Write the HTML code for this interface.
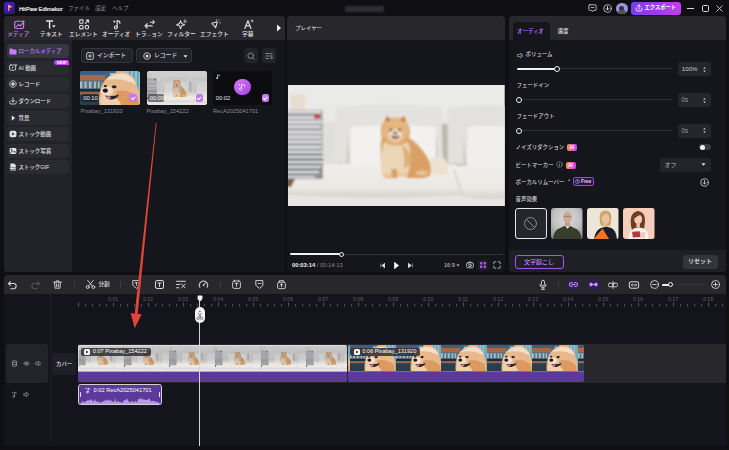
<!DOCTYPE html>
<html lang="ja"><head><meta charset="utf-8"><title>HitPaw Edimakor</title>
<style>
*{box-sizing:border-box;margin:0;padding:0}
html,body{width:729px;height:450px;overflow:hidden;background:#0e0e13}
body{position:relative;font-family:"Liberation Sans","Noto Sans CJK JP",sans-serif;color:#d6d6dc;font-size:6px;line-height:1}
.a{position:absolute}
.t{position:absolute;white-space:nowrap;line-height:1}
.panel{position:absolute;background:#15151c;border-radius:4px;overflow:hidden}
.hdr{position:absolute;left:0;top:0;right:0;background:#27272c}
svg{position:absolute;overflow:visible}
.ic{stroke:#d8d8de;fill:none;stroke-width:1;stroke-linecap:round;stroke-linejoin:round}
.side{position:absolute;left:3px;width:61.500px;height:14px;border-radius:3px;background:#2a2b30}
.side .t{left:11.500px;top:5px;font-size:5.450px;color:#e2e2e8;font-weight:500}
.btn{position:absolute;border-radius:3px;background:#22222a;border:1px solid #34343d}
.sl{position:absolute;height:1px;background:#2e2e36}
.sf{position:absolute;height:2px;background:#f0f0f2;border-radius:1px}
.kn{position:absolute;width:6px;height:6px;border-radius:50%;border:1.5px solid #f0f0f2;background:#15151c}
.vb{position:absolute;left:169.300px;width:33px;height:14px;border-radius:3px;background:#25252c}
.lab{font-size:5.450px;color:#d2d2d8}
.ai{position:absolute;width:10px;height:7px;border-radius:2px;background:linear-gradient(90deg,#f0a23c,#e84fd0 60%,#b44df0);font-size:4.5px;color:#fff;font-weight:bold;text-align:center;line-height:7px}
.chk{width:7.500px;height:7.500px;border-radius:2.200px;background:#c279ea}
.chk:after{content:"";position:absolute;left:1.900px;top:1.600px;width:3.4px;height:2px;border-left:1px solid #fff;border-bottom:1px solid #fff;transform:rotate(-48deg)}
</style></head><body>

<svg width="0" height="0" style="position:absolute"><defs>
<filter id="b1" x="-10%" y="-10%" width="120%" height="120%"><feGaussianBlur stdDeviation="0.9"/></filter>
<filter id="b0" x="-10%" y="-10%" width="120%" height="120%"><feGaussianBlur stdDeviation="0.55"/></filter><filter id="b3" x="-10%" y="-10%" width="120%" height="120%"><feGaussianBlur stdDeviation="1.6"/></filter>
<linearGradient id="wall" x1="0" y1="0" x2="0" y2="1"><stop offset="0" stop-color="#ebebea"/><stop offset="1" stop-color="#e4e3e1"/></linearGradient>
<linearGradient id="seat" x1="0" y1="0" x2="0" y2="1"><stop offset="0" stop-color="#f1efec"/><stop offset=".7" stop-color="#ebe8e4"/><stop offset="1" stop-color="#d6d2cd"/></linearGradient>
<symbol id="sofa" viewBox="0 0 217 122" preserveAspectRatio="none">
<rect x="-10" y="-10" width="237" height="142" fill="url(#wall)"/>
<g filter="url(#b1)">
<rect x="-10" y="108" width="240" height="30" fill="#e8e6e3"/>
<rect x="30" y="38" width="196" height="48" fill="#cfcbc6"/>
<rect x="30" y="37" width="20" height="47" fill="#e0dfdc"/>
<rect x="2.500" y="9.500" width="14.500" height="15.500" fill="#e6ddd0"/>
<path d="M48 22q54-5 106 0l2 56H46z" fill="#e4e2de"/>
<path d="M160 23q30-4 62-2v57h-64z" fill="#e3e1dd"/>
<path d="M154 40h6v38h-5z" fill="#bcb7b1"/>
<path d="M60 50l3 33h-5z" fill="#d0cdc8"/>
<path d="M63 42q42-3.500 85 0l1 41H62z" fill="#f2f1ef"/>
<path d="M148 46l4 36h-4z" fill="#d2cfca"/>
<path d="M180 42q20-2.500 42 0v39h-43z" fill="#f0efed"/>
<path d="M176 50l3 30h-4z" fill="#d2cfca"/>
<path d="M30 80q70-4 139 0l7 30q-90 5-182 0l2-10z" fill="url(#seat)"/>
<path d="M164 82q30-3 62-2v33q-30 3-52-2z" fill="url(#seat)"/>
<path d="M166 84l9 27" stroke="#c9c5bf" stroke-width="1.200" fill="none"/>
<rect x="-5" y="25" width="40" height="40" fill="#b2b3b7"/><rect x="-5" y="65" width="40" height="29" fill="#8e9094"/>
<g stroke="#e2e2e4" stroke-width="1.900"><path d="M-5 27h38M-5 32.500h37M-5 37h39M-5 42h37M-5 47h39M-5 52h38M-5 57h39M-5 62h38M-5 67h40M-5 72h41M-5 77h40M-5 82h38M-5 87h36M-5 92h32"/></g>
<g stroke="#6e7078" stroke-width=".7"><path d="M-5 29.500h38M-5 44.500h38M-5 59.500h39M-5 74.500h41M-5 84.500h38"/></g>
<rect x="26" y="29" width="6.500" height="4.500" fill="#c4453b"/>
<path d="M-3 94h10l-4 8h-6z" fill="#7a5c44"/>
</g>
<g filter="url(#b1)">
<path d="M142 75q9-7 16 0q5 8 1 14q-9 3-17-2z" fill="#ece2d2"/>
<path d="M94 52q-3-10 2-15l3-6 5 4q4-1.500 8 0l5-4 2 7q5 6 2 15q9 5 17 17q8 12 4 21l-7 2h-16l-1-3h-8l-1 3h-12q-5-12-4-24q-1-9 1-17z" fill="#d9a064"/>
<path d="M96 57q12 7 24 0q4 9 2 22q-1 8-3 12h-9l-1-7h-5l-1 7h-9q-3-16 2-34z" fill="#ecd6b8"/>
<path d="M114 60q8 4 10 16q-4 6-8 8q2-12-2-24z" fill="#dfae74"/>
<path d="M94.500 50q-2-10 4-15q9-5 18 0q6 5 4 15q-4 9-13 9.500q-9-.5-13-9.500z" fill="#e6b680"/>
<path d="M100 50q3-6 7.500-6q4.500 0 7.500 6q-2 6-7.500 6.500q-5.500-.5-7.500-6.500z" fill="#f2dcc0"/>
<path d="M98 37l1-5.500 4 3.500zM117 37l-1-5.500-4 3.500z" fill="#b9753c"/>
<path d="M103.500 50.500q4 1.500 8 0q-.5 3.500-4 4q-3.500-.5-4-4z" fill="#40211e"/>
<ellipse cx="107.500" cy="53" rx="1.800" ry="1.100" fill="#d98a8a"/>
<circle cx="103" cy="44.800" r="1.200" fill="#16100e"/><circle cx="111.800" cy="44.800" r="1.200" fill="#16100e"/>
<ellipse cx="107.300" cy="48" rx="1.700" ry="1.200" fill="#16100e"/>
<ellipse cx="134" cy="88" rx="6" ry="2.400" fill="#eac49a"/>
<path d="M96 88h8v4h-8zM110 88h9v4h-9z" fill="#ecc9a0"/>
</g>
</symbol>
<linearGradient id="teal" x1="0" y1="0" x2="1" y2="0"><stop offset="0" stop-color="#2d6c7c"/><stop offset=".5" stop-color="#3f8fa0"/><stop offset="1" stop-color="#3a8fa8"/></linearGradient>
<symbol id="pom" viewBox="0 0 60 34" preserveAspectRatio="none">
<rect x="-5" y="-5" width="70" height="44" fill="#3c6f86"/>
<g filter="url(#b0)">
<rect x="-3" y="-3" width="32" height="6.500" fill="#3f5f80"/>
<rect x="-3" y="4" width="28" height="5.500" fill="#a86a48"/>
<rect x="-3" y="10" width="26" height="7.800" fill="#5f7886"/>
<g fill="#a9bac4"><rect x="0" y="10.500" width="2.200" height="7"/><rect x="4.500" y="10.500" width="2" height="7"/><rect x="9" y="10.500" width="2.400" height="7"/><rect x="14" y="10.500" width="2" height="7"/><rect x="18" y="10.500" width="1.600" height="7"/></g>
<rect x="-3" y="17.800" width="26" height="3" fill="#1c2c3c"/>
<rect x="-3" y="20.800" width="24" height="3" fill="#9c6244"/>
<rect x="-3" y="23.800" width="26" height="14" fill="#2a3c4c"/>
<rect x="30" y="-3" width="34" height="40" fill="#8cc4d0"/>
<g fill="#5fa0b4"><rect x="49" y="-2" width="1.600" height="30"/><rect x="53" y="-2" width="1.600" height="30"/><rect x="57" y="-2" width="1.600" height="30"/></g>
<rect x="28" y="-3" width="8" height="5" fill="#3a6a84"/>
</g>
<g filter="url(#b0)">
<path d="M20 38q-2-10 0-17q1-9 8-15q9-7 19-4q8 3 10 13q4 8 3 23z" fill="#e9b88c"/>
<path d="M26 9q8-8 20-6q8 3 10 11q-12-8-30-5z" fill="#f4dcc6"/>
<path d="M36 20q10-2 20 4q4 6 2 12h-18q-6-8-4-16z" fill="#dc9a62"/>
<path d="M21 36q-1-8 1-13q6 6 14 4q4 2 6 10z" fill="#f0cfae"/>
<ellipse cx="27" cy="20" rx="6" ry="4.500" fill="#f3dcc4"/>
<ellipse cx="25.300" cy="19.600" rx="2.600" ry="2.100" fill="#14121a"/>
<path d="M25.500 24.500q7 1.500 13.500-1q-1 3.500-7 5q-5 .5-6.500-4z" fill="#2c2028"/>
<ellipse cx="28.500" cy="26.600" rx="2.400" ry="1.300" fill="#d88a96"/>
<ellipse cx="34.200" cy="15.700" rx="2.300" ry="1.500" fill="#1c2430"/><ellipse cx="25.300" cy="15.200" rx="1.500" ry="1.100" fill="#1c2430"/>
</g>
</symbol>
</defs></svg>

<!-- TITLE BAR -->
<div class="a" style="left:3.600px;top:2px;width:11.800px;height:11.500px;border-radius:2.600px;background:linear-gradient(135deg,#4a22c0,#2a1478)"></div>
<svg style="left:3.600px;top:2px" width="11.800" height="11.500" viewBox="0 0 12 12"><defs><linearGradient id="lg" x1="0" y1="0" x2="1" y2="1"><stop offset="0" stop-color="#ffb04a"/><stop offset="1" stop-color="#ff4fc0"/></linearGradient></defs><path d="M4 2.600l5 2.400-3.600 1.600V9.500H4z" fill="url(#lg)"/></svg>
<div class="t" style="left:19px;top:6.600px;font-size:5.700px;color:#ececf0;-webkit-text-stroke:.2px #ececf0">HitPaw Edimakor</div>
<div class="t" style="left:68px;top:6.300px;font-size:5.500px;color:#8e8e98">ファイル</div>
<div class="t" style="left:95px;top:6.300px;font-size:5.500px;color:#8e8e98">設定</div>
<div class="t" style="left:112px;top:6.300px;font-size:5.500px;color:#8e8e98">ヘルプ</div>
<div class="a" style="left:345px;top:5.500px;width:39px;height:6.500px;background:#2e2e35;filter:blur(.8px)"></div>

<svg style="left:588px;top:4px" width="9" height="9" viewBox="0 0 9 9"><path d="M1.800.8h5.400a1 1 0 0 1 1 1v3.600a1 1 0 0 1-1 1H5.300L4.500 7.600 3.700 6.400H1.800a1 1 0 0 1-1-1V1.800a1 1 0 0 1 1-1z" class="ic" style="stroke-width:.8"/><path d="M3 3.600h3" class="ic" style="stroke-width:.8"/></svg>
<svg style="left:602.500px;top:3.500px" width="9" height="9" viewBox="0 0 9 9"><circle cx="4.500" cy="4.500" r="3.800" class="ic" style="stroke-width:.8"/><path d="M4.500 2.400v3.400M3 4.500l1.500 1.500L6 4.500" class="ic" style="stroke-width:.9"/></svg>
<div class="a" style="left:616px;top:2.500px;width:11.500px;height:11.500px;border-radius:50%;background:#9c94de;overflow:hidden"><div class="a" style="left:3.200px;top:3px;width:5px;height:5px;border-radius:50%;background:#3a2e3c"></div><div class="a" style="left:2px;top:7.500px;width:7.500px;height:6px;border-radius:3px 3px 0 0;background:#5a4a52"></div></div>
<div class="a" style="left:631px;top:1.500px;width:50px;height:13px;border-radius:3px;background:linear-gradient(90deg,#7a3cf0,#c23fe6)"><svg style="left:4px;top:2.500px" width="8" height="8" viewBox="0 0 8 8"><path d="M4 5.200V1M2.500 2.500L4 1l1.500 1.500" class="ic" style="stroke:#fff;stroke-width:.8"/><path d="M1.200 4v2.200a.8.8 0 0 0 .8.800h4a.8.8 0 0 0 .8-.8V4" class="ic" style="stroke:#fff;stroke-width:.8"/></svg><div class="t" style="left:13.500px;top:3.800px;font-size:5.300px;color:#fff;font-weight:bold">エクスポート</div></div>
<div class="a" style="left:687px;top:7.500px;width:7px;height:1px;background:#d8d8de"></div>
<div class="a" style="left:701.500px;top:4.500px;width:7px;height:7px;border:1px solid #d8d8de;border-radius:1.500px"></div>
<svg style="left:716px;top:4.500px" width="7" height="7" viewBox="0 0 7 7"><path d="M.8.800l5.400 5.400M6.200.800L.8 6.200" class="ic" style="stroke-width:.9"/></svg>


<!-- LEFT PANEL -->
<div class="panel" id="left" style="left:4px;top:16px;width:281px;height:256.300px">
<div class="hdr" style="height:24px"></div>
<div class="a" style="left:0;top:24px;width:68.200px;bottom:0;background:#222328"></div>
<!-- top tabs : coordinates relative to panel (panel left=4, top=16) -->
<svg style="left:9.3px;top:2.7px" width="13.400" height="11.200" viewBox="0 0 12 10"><rect x="1.5" y="2" width="8" height="6.5" rx="1.5" stroke="#c77dff" fill="none" stroke-width="1.1"/><path d="M3 7l2-2 1.5 1.2L9 3.5" stroke="#c77dff" fill="none" stroke-width="1"/><path d="M9.5 1.2v2M8.5 2.2h2" stroke="#c77dff" stroke-width=".8"/></svg>
<div class="t" style="left:3px;top:16.300px;font-size:5.750px;color:#c77dff;font-weight:500">メディア</div>

<svg style="left:40.3px;top:2.7px" width="13.400" height="11.200" viewBox="0 0 12 10"><path d="M1.800 1.800h6.400M5 1.800v6.700" stroke="#e4e4ea" stroke-width="1.300" fill="none"/><path d="M7.200 5.600h3.200L8.800 7.800z" fill="#e4e4ea"/></svg>
<div class="t" style="left:36px;top:16.300px;font-size:5.750px;color:#e0e0e6;font-weight:500">テキスト</div>

<svg style="left:74.3px;top:2.7px" width="13.400" height="11.200" viewBox="0 0 12 10"><rect x="1.5" y=".8" width="3" height="3" rx=".6" class="ic"/><rect x="1.500" y="5.800" width="3" height="3" rx=".6" class="ic"/><circle cx="8" cy="7.300" r="1.600" class="ic"/><path d="M6.5 4L9.5 1M7.5 1h2v2" class="ic"/></svg>
<div class="t" style="left:65px;top:16.300px;font-size:5.750px;color:#e0e0e6;font-weight:500">エレメント</div>

<svg style="left:107.3px;top:2.7px" width="13.400" height="11.200" viewBox="0 0 12 10"><path d="M5.5 7.5V1.5c1 0 2.5.6 2.5 2.2" class="ic" style="stroke-width:1.1"/><circle cx="4.3" cy="7.6" r="1.3" class="ic"/><path d="M3 1.5v1.6M2.2 2.3h1.6" class="ic" style="stroke-width:.7"/></svg>
<div class="t" style="left:98px;top:16.300px;font-size:5.750px;color:#e0e0e6;font-weight:500">オーディオ</div>

<svg style="left:139.3px;top:2.7px" width="13.400" height="11.200" viewBox="0 0 12 10"><path d="M1.800 6.200h6.400M1.800 6.200l2-2M1.800 6.200l2 2" class="ic" style="stroke-width:1.100"/><path d="M6.500 2.800h3.700M8.900 1.500l1.300 1.300-1.300 1.300" class="ic" style="stroke-width:.9"/></svg>
<div class="t" style="left:131px;top:16.300px;font-size:5.750px;color:#e0e0e6;font-weight:500">トラ...ョン</div>

<svg style="left:171.3px;top:2.7px" width="13.400" height="11.200" viewBox="0 0 12 10"><path d="M5 1.5l1 2.6 2.6 1-2.6 1-1 2.6-1-2.6-2.6-1 2.6-1z" class="ic" style="stroke-width:.9"/><path d="M9 .8l.4 1 .9.4-.9.4-.4 1-.4-1-.9-.4.9-.4z" class="ic" style="stroke-width:.6"/></svg>
<div class="t" style="left:163px;top:16.300px;font-size:5.750px;color:#e0e0e6;font-weight:500">フィルター</div>

<svg style="left:205.3px;top:2.7px" width="13.400" height="11.200" viewBox="0 0 12 10"><path d="M2.5 3.8l5-1.3-1.6 5.3z" class="ic" style="stroke-width:1"/><path d="M8.6 1.3l.6-.6M9.5 3.4h.9M6.8.4v.8" class="ic" style="stroke-width:.6"/></svg>
<div class="t" style="left:196px;top:16.300px;font-size:5.750px;color:#e0e0e6;font-weight:500">エフェクト</div>

<svg style="left:238.3px;top:2.7px" width="13.400" height="11.200" viewBox="0 0 12 10"><path d="M2.5 8.5L5.3 1.5 8 8.5M3.5 6.2h3.6" class="ic" style="stroke-width:1.1"/><path d="M9 .8v1.8M8.1 1.7h1.8" class="ic" style="stroke-width:.7"/></svg>
<div class="t" style="left:238px;top:16.300px;font-size:5.750px;color:#e0e0e6;font-weight:500">字幕</div>

<svg style="left:272px;top:8px" width="6" height="8" viewBox="0 0 6 8"><path d="M1 .5l4 3.5-4 3.5z" fill="#f0f0f4"/></svg>

<!-- sidebar -->
<div class="side" style="top:28px;background:#36373e"><svg style="left:2.200px;top:3.5px" width="8" height="7" viewBox="0 0 8 7"><path d="M.5 1.2a.7.7 0 0 1 .7-.7h2l.8 1h2.8a.7.7 0 0 1 .7.7v3.6a.7.7 0 0 1-.7.7H1.2a.7.7 0 0 1-.7-.7z" fill="#c77dff"/></svg><div class="t" style="color:#c77dff">ローカルメディア</div></div>
<div class="side" style="top:44.600px"><svg style="left:2.200px;top:3.5px" width="8" height="7" viewBox="0 0 8 7"><rect x=".6" y="1" width="6" height="5.2" rx="1.2" class="ic" style="stroke-width:.9"/><path d="M3 2.6v2l1.7-1z" fill="#d8d8de"/><path d="M7 .2v1.6M6.2 1h1.6" class="ic" style="stroke-width:.6"/></svg><div class="t">AI 動画</div>
 <div class="a" style="left:47px;top:-.7px;width:15px;height:5.500px;border-radius:2.700px 2.700px 0 2.700px;background:linear-gradient(90deg,#9a4df5,#d24be8);font-size:4px;color:#fff;font-weight:bold;text-align:center;line-height:5.500px;font-style:italic">NEW</div></div>
<div class="side" style="top:61.300px"><svg style="left:2.200px;top:3px" width="8" height="8" viewBox="0 0 8 8"><circle cx="4" cy="4" r="3.2" class="ic" style="stroke-width:.8" stroke-dasharray="1.2 .6"/><circle cx="4" cy="4" r="1.8" fill="#d8d8de"/></svg><div class="t">レコード</div></div>
<div class="side" style="top:77.900px"><svg style="left:2.200px;top:3px" width="8" height="8" viewBox="0 0 8 8"><path d="M4 .8v4M2.4 3.4L4 5l1.6-1.6" class="ic" style="stroke-width:.9"/><path d="M.8 4.5v1.2a1.3 1.3 0 0 0 1.3 1.3h3.8a1.3 1.3 0 0 0 1.3-1.3V4.5" class="ic" style="stroke-width:.9"/></svg><div class="t">ダウンロード</div></div>
<div class="side" style="top:94.500px"><svg style="left:4px;top:4px" width="5" height="6" viewBox="0 0 5 6"><path d="M.8.6l3.4 2.4L.8 5.4z" fill="#e6e6ea"/></svg><div class="t">背景</div></div>
<div class="side" style="top:111.200px"><svg style="left:2.200px;top:3px" width="8" height="8" viewBox="0 0 8 8"><rect x=".6" y=".8" width="6.8" height="6.4" rx="1.6" fill="#e0e0e6"/><path d="M3.2 2.6v2.8l2.4-1.4z" fill="#1f1f26"/></svg><div class="t">ストック動画</div></div>
<div class="side" style="top:127.800px"><svg style="left:2.200px;top:3px" width="8" height="8" viewBox="0 0 8 8"><rect x=".6" y="1" width="6.8" height="6" rx="1.4" fill="#e0e0e6"/><path d="M1.4 6l2-2.2 1.4 1.4 1-1 1.2 1.6" stroke="#1f1f26" stroke-width=".8" fill="none"/><circle cx="2.4" cy="2.7" r=".7" fill="#1f1f26"/></svg><div class="t">ストック写真</div></div>
<div class="side" style="top:144.400px"><svg style="left:2.200px;top:3px" width="8" height="8" viewBox="0 0 8 8"><path d="M1.4.6h3.8l1.6 1.6v5.2H1.4z" fill="#e0e0e6"/><rect x=".4" y="4" width="6" height="2.6" fill="#1f1f26"/><rect x=".8" y="4.4" width="5.4" height="1.8" fill="#e0e0e6"/></svg><div class="t">ストックGIF</div></div>

<!-- buttons -->
<div class="btn" style="left:76.500px;top:32.200px;width:52.500px;height:15px"><svg style="left:4.500px;top:2.500px" width="8" height="8" viewBox="0 0 8 8"><rect x=".6" y=".6" width="6.8" height="6.8" rx="1.4" class="ic" style="stroke-width:.8"/><path d="M4 2.2v3.6M2.2 4h3.6" class="ic" style="stroke-width:.8"/></svg><div class="t" style="left:15.500px;top:4.100px;font-size:5.800px;color:#d4d4da;font-weight:500">インポート</div></div>
<div class="btn" style="left:132px;top:32.200px;width:56px;height:15px"><svg style="left:6px;top:2.500px" width="8" height="8" viewBox="0 0 8 8"><circle cx="4" cy="4" r="3.3" class="ic" style="stroke-width:.8"/><circle cx="4" cy="4" r="1.5" fill="#d8d8de"/></svg><div class="t" style="left:17px;top:4.100px;font-size:5.800px;color:#d4d4da;font-weight:500">レコード</div><svg style="left:46px;top:5.5px" width="5" height="3" viewBox="0 0 5 3"><path d="M.5.3h4L2.5 2.7z" fill="#e6e6ea"/></svg></div>
<div class="a" style="left:239.500px;top:32.400px;width:14.500px;height:14.500px;border-radius:3px;background:#22222a"><svg style="left:3.5px;top:3.5px" width="8" height="8" viewBox="0 0 8 8"><circle cx="3.7" cy="3.7" r="2.8" class="ic" style="stroke:#9c9ca6;stroke-width:.8"/><path d="M5.8 5.8l1.4 1.4" class="ic" style="stroke:#9c9ca6;stroke-width:.8"/></svg></div>
<div class="a" style="left:257.800px;top:32.400px;width:14.500px;height:14.500px;border-radius:3px;background:#22222a"><svg style="left:3.5px;top:3.5px" width="8" height="8" viewBox="0 0 8 8"><path d="M.8 1.5h4.4M.8 4h4.4M.8 6.5h3M6.8 1v5.6M5.8 5.6l1 1 1-1" class="ic" style="stroke:#9c9ca6;stroke-width:.8"/></svg></div>

<!-- media thumbs -->
<div class="a" id="th1" style="left:76px;top:55px;width:60px;height:34px;border-radius:3px;overflow:hidden;background:#2e6f80"><svg style="left:0;top:0;overflow:hidden" width="60" height="34"><use href="#pom" width="60" height="34"/></svg><div class="a" style="left:1.800px;top:22.800px;width:16px;height:8.500px;border-radius:1.800px;background:rgba(20,24,32,.6)"></div><div class="t" style="left:3.300px;top:24.600px;font-size:5.800px;color:#f0f0f4">00:10</div></div>
<div class="a" id="th2" style="left:142.5px;top:55px;width:60px;height:34px;border-radius:3px;overflow:hidden;background:#dcdad6"><svg style="left:0;top:0;overflow:hidden" width="60" height="34"><use href="#sofa" width="60" height="34"/></svg><div class="a" style="left:0;top:0;width:100%;height:100%;background:linear-gradient(rgba(96,96,108,.2) 0,rgba(96,96,108,.2) 58%,rgba(96,96,108,0) 78%)"></div><div class="a" style="left:1.800px;top:22.800px;width:16px;height:8.500px;border-radius:1.800px;background:rgba(70,70,76,.72)"></div><div class="t" style="left:3.300px;top:24.600px;font-size:5.800px;color:#f0f0f4">00:09</div></div>
<div class="a" id="th3" style="left:208.5px;top:55px;width:59px;height:34px;border-radius:3px;overflow:hidden;background:#0c0c10">
 <svg style="left:3.600px;top:3px" width="4.500" height="5.400" viewBox="0 0 5 6"><path d="M1.8 4.6V.8l2.2.6v1" stroke="#fff" stroke-width=".7" fill="none"/><circle cx="1.2" cy="4.6" r=".9" fill="#fff"/></svg>
 <div class="a" style="left:21.400px;top:7.600px;width:16.800px;height:16.800px;border-radius:50%;background:linear-gradient(135deg,#d478f4,#a846e8)"></div>
 <svg style="left:24.800px;top:11px" width="10" height="10" viewBox="0 0 10 10"><path d="M4.6 7V2.4l3 .8v1.3" stroke="#f3d8ff" stroke-width=".9" fill="none" stroke-linecap="round"/><circle cx="3.6" cy="7" r="1.2" stroke="#f3d8ff" stroke-width=".8" fill="none"/><path d="M2.4 2v1.6M1.6 2.8h1.6" stroke="#f3d8ff" stroke-width=".6"/></svg>
 <div class="t" style="left:3.300px;top:24.600px;font-size:5.800px;color:#e4e4e8">00:02</div>
</div>
<div class="t" style="left:76.5px;top:92.5px;font-size:5.650px;color:#8a8a94">Pixabay_131920</div>
<div class="t" style="left:142.5px;top:92.5px;font-size:5.650px;color:#8a8a94">Pixabay_154222</div>
<div class="t" style="left:209px;top:92.5px;font-size:5.650px;color:#8a8a94">RecA2025041701</div>
<div class="a chk" style="left:125px;top:78.300px"></div>
<div class="a chk" style="left:191.500px;top:78.300px"></div>
<div class="a chk" style="left:257.500px;top:78.300px"></div>

</div>

<!-- PLAYER PANEL -->
<div class="panel" id="player" style="left:287.400px;top:16px;width:217.600px;height:256.300px">
<div class="hdr" style="height:24px"></div>
<div class="t" style="left:7.800px;top:9.600px;font-size:5.400px;color:#d6d6dc;font-weight:500">プレイヤー</div>
<!-- photo: panel-relative (panel left=288, top=16) -->
<svg style="left:.7px;top:68.600px;overflow:hidden" width="216.700" height="121.900"><use href="#sofa" width="216.700" height="121.900"/></svg>
<!-- progress -->
<div class="a" style="left:3px;top:237.500px;width:212.500px;height:1px;background:#33333b"></div>
<div class="a" style="left:3px;top:237px;width:51px;height:2px;background:#f2f2f4;border-radius:1px"></div>
<div class="a" style="left:52px;top:235.5px;width:5px;height:5px;border-radius:50%;border:1.2px solid #f2f2f4;background:#18181e"></div>
<div class="t" style="left:4.600px;top:246.500px;font-size:5.800px;color:#ececf0"><b style="font-weight:bold">00:03:14</b> <span style="color:#8a8a94">/ 00:14:13</span></div>
<svg style="left:91.900px;top:245.800px" width="8" height="7" viewBox="0 0 8 7"><path d="M6 .8v5.4L2.2 3.5z" fill="#d8d8de"/><path d="M1.6 1.5v4" stroke="#8a8a94" stroke-width=".8"/></svg>
<svg style="left:105.900px;top:244.700px" width="7" height="9" viewBox="0 0 7 9"><path d="M1.2.8l4.8 3.7-4.8 3.7z" fill="#fff"/></svg>
<svg style="left:118.900px;top:245.800px" width="8" height="7" viewBox="0 0 8 7"><path d="M2 .8v5.4l3.8-2.7z" fill="#d8d8de"/><path d="M6.4 1.5v4" stroke="#8a8a94" stroke-width=".8"/></svg>
<div class="t" style="left:156.500px;top:246.800px;font-size:5.600px;color:#c8c8d0">16:9</div>
<svg style="left:168.600px;top:247.800px" width="4" height="3" viewBox="0 0 4 3"><path d="M.4.4h3.2L2 2.4z" fill="#c8c8d0"/></svg>
<svg style="left:178.500px;top:245.300px" width="8" height="8" viewBox="0 0 8 8"><rect x=".7" y="1.8" width="6.6" height="5" rx="1.2" class="ic" style="stroke-width:.8"/><circle cx="4" cy="4.4" r="1.3" class="ic" style="stroke-width:.8"/><path d="M2.8 1.6l.5-.8h1.4l.5.8" class="ic" style="stroke-width:.7"/></svg>
<div class="a" style="left:190.700px;top:244.300px;width:10px;height:10px;border-radius:2px;background:#1f1f27"></div><svg style="left:191.700px;top:245.300px" width="8" height="8" viewBox="0 0 8 8"><g fill="#a456f0"><rect x="1" y="1" width="2.4" height="2.4" rx=".5"/><rect x="4.6" y="1" width="2.4" height="2.4" rx=".5"/><rect x="1" y="4.6" width="2.4" height="2.4" rx=".5"/><rect x="4.6" y="4.6" width="2.4" height="2.4" rx=".5"/></g></svg>
<svg style="left:205.700px;top:245.300px" width="8" height="8" viewBox="0 0 8 8"><path d="M.8 2.8V1.6a.8.8 0 0 1 .8-.8h1.2M5.2.8h1.2a.8.8 0 0 1 .8.8v1.2M7.200 5.200v1.200a.8.8 0 0 1-.8.8H5.200M2.800 7.200H1.600a.8.8 0 0 1-.8-.8V5.200" class="ic" style="stroke-width:.8"/></svg>

</div>

<!-- RIGHT PANEL -->
<div class="panel" id="right" style="left:508.500px;top:16px;width:217.200px;height:256.300px">
<div class="hdr" style="height:24px"></div>
<!-- panel-relative: left=509, top=16 -->
<div class="a" style="left:4px;top:6px;width:37px;height:18px;border-radius:4px 4px 0 0;background:#15151c"></div>
<div class="t" style="left:8.500px;top:13.200px;font-size:5.450px;color:#c77dff;font-weight:500">オーディオ</div>
<div class="t" style="left:49px;top:13.200px;font-size:5.450px;color:#e0e0e6;font-weight:500">速度</div>

<svg style="left:8px;top:35.500px" width="7" height="7" viewBox="0 0 7 7"><path d="M.8 2.500h1.400L4 1v5L2.200 4.500H.8z" class="ic" style="stroke-width:.7;stroke:#b0b0b8"/><path d="M5.300 2.300q.8 1.200 0 2.400" class="ic" style="stroke-width:.7;stroke:#b0b0b8"/></svg>
<div class="t lab" style="left:17px;top:36px;font-weight:500">ボリューム</div>
<div class="sl" style="left:8px;top:52px;width:156px"></div>
<div class="sf" style="left:8px;top:51.500px;width:40px"></div>
<div class="kn" style="left:45px;top:49.500px"></div>
<div class="vb" style="top:46.300px"><div class="t" style="left:4px;top:3.900px;font-size:6.200px;color:#c8c8d0">100%</div><svg style="left:24.500px;top:2.500px" width="5" height="9" viewBox="0 0 5 9"><path d="M1.200 3.400L2.500 1.900 3.800 3.400zM1.200 5.600L2.500 7.100 3.800 5.600z" fill="#e0e0e6"/></svg></div>

<div class="t lab" style="left:8px;top:67px;font-weight:500">フェードイン</div>
<div class="sl" style="left:8px;top:83px;width:156px"></div>
<div class="kn" style="left:7px;top:80.500px"></div>
<div class="vb" style="top:77px"><div class="t" style="left:3.800px;top:3.800px;font-size:6.300px;color:#9a9aa4">0s</div><svg style="left:24.500px;top:2.500px" width="5" height="9" viewBox="0 0 5 9"><path d="M1.200 3.400L2.500 1.900 3.800 3.400zM1.200 5.600L2.500 7.100 3.800 5.600z" fill="#e0e0e6"/></svg></div>

<div class="t lab" style="left:8px;top:98px;font-weight:500">フェードアウト</div>
<div class="sl" style="left:8px;top:114px;width:156px"></div>
<div class="kn" style="left:7px;top:111.500px"></div>
<div class="vb" style="top:107.900px"><div class="t" style="left:3.800px;top:3.800px;font-size:6.300px;color:#9a9aa4">0s</div><svg style="left:24.500px;top:2.500px" width="5" height="9" viewBox="0 0 5 9"><path d="M1.200 3.400L2.500 1.900 3.800 3.400zM1.200 5.600L2.500 7.100 3.800 5.600z" fill="#e0e0e6"/></svg></div>

<div class="t lab" style="left:7px;top:128.900px;font-weight:500">ノイズリダクション</div>
<div class="ai" style="left:58.500px;top:128.200px">AI</div>
<div class="a" style="left:190.500px;top:128.300px;width:11.500px;height:6px;border-radius:3px;background:#3a3a42"></div>
<div class="a" style="left:191.200px;top:128.800px;width:5px;height:5px;border-radius:50%;background:#f4f4f6"></div>

<div class="t lab" style="left:7px;top:146.600px;font-weight:500">ビートマーカー</div>
<svg style="left:47.500px;top:144.800px" width="7" height="7" viewBox="0 0 7 7"><circle cx="3.500" cy="3.500" r="2.800" class="ic" style="stroke:#9a9aa4;stroke-width:.6"/><path d="M3.500 3.200v1.800" class="ic" style="stroke:#9a9aa4;stroke-width:.7"/><circle cx="3.500" cy="2.100" r=".4" fill="#9a9aa4"/></svg>
<div class="ai" style="left:57px;top:145.500px">AI</div>
<div class="a" style="left:151px;top:141.500px;width:51px;height:14px;border-radius:3px;background:#23232a"><div class="t" style="left:5px;top:4px;font-size:6px;color:#b4b4bc">オフ</div><svg style="left:41.500px;top:5.500px" width="5" height="3" viewBox="0 0 5 3"><path d="M.5.3h4L2.500 2.700z" fill="#e6e6ea"/></svg></div>

<div class="t lab" style="left:7px;top:164.300px;font-weight:500">ボーカルリムーバー</div>
<div class="t" style="left:59.800px;top:162.200px;font-size:5px;color:#d2d2d8">•</div>
<div class="a" style="left:64.200px;top:161.300px;width:21.500px;height:8.300px;border-radius:2.200px;border:.8px solid #8c52d6;background:#2b1545"><svg style="left:1.700px;top:.6px" width="5" height="5" viewBox="0 0 5 5"><circle cx="2.500" cy="2.500" r="1.900" fill="none" stroke="#dcc0ff" stroke-width=".55"/><path d="M2.500 1.400v1.200l.8.500" fill="none" stroke="#dcc0ff" stroke-width=".55"/></svg><div class="t" style="left:7.300px;top:1.400px;font-size:4.800px;color:#e4d0ff;font-weight:bold">Free</div></div>
<svg style="left:191.500px;top:162px" width="9" height="9" viewBox="0 0 9 9"><circle cx="4.500" cy="4.500" r="3.800" class="ic" style="stroke-width:.8"/><path d="M4.500 2.400v3.600M3 4.600l1.500 1.500L6 4.600" class="ic" style="stroke-width:.8"/></svg>

<div class="t lab" style="left:7px;top:181.200px;font-weight:500">音声効果</div>
<div class="a" style="left:6.500px;top:191.500px;width:31.500px;height:31.500px;border-radius:3px;border:1.200px solid #e8e8ec;background:#26262d"><svg style="left:7.300px;top:7.300px" width="15" height="15" viewBox="0 0 15 15"><circle cx="7.500" cy="7.500" r="6" class="ic" style="stroke:#8a8a92;stroke-width:1"/><path d="M3.300 3.300l8.400 8.400" class="ic" style="stroke:#8a8a92;stroke-width:1"/></svg></div>
<svg style="left:42.500px;top:191.500px;overflow:hidden;border-radius:3px" width="31.500" height="31.500" viewBox="0 0 32 32"><defs><radialGradient id="gm" cx=".5" cy=".35" r=".75"><stop offset="0" stop-color="#dcdcdc"/><stop offset=".55" stop-color="#c2c2c2"/><stop offset="1" stop-color="#8c8c8c"/></radialGradient></defs><rect width="32" height="32" fill="url(#gm)"/><g filter="url(#b0)"><path d="M2 33q0-11 8-13l4-2h5l4 2q8 2 8 13z" fill="#383e2e"/><rect x="14.300" y="13" width="5" height="6" fill="#c49a86"/><ellipse cx="16.700" cy="9.300" rx="4.500" ry="6" fill="#cfa896"/><path d="M13 8.500h7.400" stroke="#7a6a64" stroke-width=".7"/><path d="M14.500 18.500l2.300 2.500 2.300-2.500z" fill="#e8e8e8"/></g></svg>
<svg style="left:78.500px;top:191.500px;overflow:hidden;border-radius:3px" width="31.500" height="31.500" viewBox="0 0 32 32"><rect width="32" height="32" fill="#eee5d9"/><g filter="url(#b0)"><path d="M13 12q-1.500-9 6-9.500q7 .5 5.500 9.500q0 4-1 6h-9q-1.500-2-1.500-6z" fill="#c9a468"/><ellipse cx="18.800" cy="11" rx="4" ry="5.300" fill="#eac2a4"/><path d="M14.500 7q3-4 8.500-1.500q-4 0-8.500 4z" fill="#d4b070"/><rect x="16.500" y="15" width="4" height="5" fill="#e2b696"/><path d="M7 33q1-11 8-13l5-1 4 1q6 2 6.500 13z" fill="#1c1e2a"/><path d="M15.800 20.800L5.500 33h17.800z" fill="#f4741c"/></g></svg>
<svg style="left:114.500px;top:191.500px;overflow:hidden;border-radius:3px" width="31.500" height="31.500" viewBox="0 0 32 32"><rect width="32" height="32" fill="#f6cdb8"/><g filter="url(#b0)"><path d="M8.500 20q-3-15 6.500-17q9 1 7 14q0 4-2 6.500h-9.500q-1.500-1-2-3.500z" fill="#6e3c28"/><ellipse cx="15.400" cy="11.500" rx="4" ry="5" fill="#f2ccb4"/><path d="M11.300 9q2-4 8-2.500q-4 .5-8 4.500z" fill="#6e3c28"/><rect x="13.600" y="15.500" width="3.600" height="4" fill="#eabfa6"/><path d="M5.500 33q0-10 6-12.500l4-1 5 1q5.500 2.500 5.500 12.500z" fill="#f5f1ef"/><path d="M9.200 24l7.800-.5 1 6-8 .5z" fill="#b8383a"/><path d="M17 24l6 1-1 6-4-1z" fill="#f0cdb8"/></g></svg>
<div class="a" style="left:0;top:234px;width:217px;height:22px;background:#1f1f26"></div>
<div class="a" style="left:6px;top:238.500px;width:49px;height:14px;border-radius:3px;border:1px solid #a456f0"><div class="t" style="left:0;right:0;top:3.500px;text-align:center;font-size:6px;color:#c084ff;font-weight:500">文字起こし</div></div>
<div class="a" style="left:174px;top:238.500px;width:35px;height:14px;border-radius:3px;background:#34343c"><div class="t" style="left:0;right:0;top:3.500px;text-align:center;font-size:6px;color:#e8e8ec;font-weight:500">リセット</div></div>

</div>

<!-- TIMELINE PANEL -->
<div class="panel" id="tl" style="left:4px;top:275.300px;width:722px;height:171px;background:#14151c">
<div class="hdr" style="height:18.700px;background:#27272c"></div>
<div class="a" style="left:0;top:.7px;width:722px;height:171px">
<!--TLS-->
<div class="a" style="left:45.500px;top:18px;width:.8px;bottom:0;background:#1b1c25"></div>
<svg style="left:4.0px;top:5.0px;transform:scale(1.12)" width="9" height="8" viewBox="0 0 9 8"><path d="M2.600 1L.9 2.700l1.700 1.700" class="ic" style="stroke-width:.9"/><path d="M1.200 2.700h4.300a2.300 2.300 0 0 1 0 4.600H3" class="ic" style="stroke-width:.9"/></svg>
<svg style="left:26.5px;top:5.0px;transform:scale(1.12)" width="9" height="8" viewBox="0 0 9 8"><path d="M6.400 1l1.700 1.700-1.700 1.700" class="ic" style="stroke:#54545e;stroke-width:.9"/><path d="M7.800 2.700H3.500a2.300 2.300 0 0 0 0 4.600H6" class="ic" style="stroke:#54545e;stroke-width:.9"/></svg>
<svg style="left:48.5px;top:4.5px;transform:scale(1.12)" width="9" height="9" viewBox="0 0 9 9"><path d="M1 2.400h7M3.300 2.400V1.300h2.400v1.100M1.900 2.400l.4 5.400h4.400l.4-5.400M3.700 4v2.400M5.300 4v2.400" class="ic" style="stroke-width:.8"/></svg>
<div class="a" style="left:69.500px;top:5.500px;width:1px;height:7px;background:#3a3a44"></div>
<svg style="left:81.5px;top:4.5px;transform:scale(1.12)" width="9" height="9" viewBox="0 0 9 9"><circle cx="2" cy="6.800" r="1.300" class="ic" style="stroke-width:.8"/><circle cx="7" cy="6.800" r="1.300" class="ic" style="stroke-width:.8"/><path d="M2.800 5.800L7 .8M6.200 5.800L2 .8" class="ic" style="stroke-width:.8"/></svg>
<div class="t" style="left:94.500px;top:6.200px;font-size:5.600px;color:#e0e0e6;font-weight:500">分割</div>
<div class="a" style="left:115.500px;top:5.500px;width:1px;height:7px;background:#3a3a44"></div>
<svg style="left:128.0px;top:4.5px;transform:scale(1.12)" width="9" height="9" viewBox="0 0 9 9"><path d="M1.500 1h6v4.500L4.500 8 1.500 5.500z" class="ic" style="stroke-width:.8"/><path d="M3.200 3h2.600M4.500 3v2.400" class="ic" style="stroke-width:.7"/></svg>
<svg style="left:151.0px;top:4.5px;transform:scale(1.12)" width="9" height="9" viewBox="0 0 9 9"><rect x=".9" y="1" width="7.200" height="7" rx="1.600" class="ic" style="stroke-width:.9"/><path d="M3 3.200h3M4.500 3.200v3" class="ic" style="stroke-width:.9"/></svg>
<svg style="left:172.0px;top:4.5px;transform:scale(1.12)" width="10" height="9" viewBox="0 0 10 9"><path d="M1 1.500h8M1 4.500h3" class="ic" style="stroke-width:.9"/><path d="M5.500 4l3.200 3.600M8.700 4L5.500 7.600" class="ic" style="stroke-width:.8"/><path d="M1 7.500h2" class="ic" style="stroke-width:.9"/></svg>
<svg style="left:195.0px;top:4.5px;transform:scale(1.12)" width="9" height="9" viewBox="0 0 9 9"><path d="M1.300 7a3.700 3.700 0 1 1 6.400 0" class="ic" style="stroke-width:.9"/><path d="M4.500 5.200l1.600-2" class="ic" style="stroke-width:.9"/><circle cx="4.500" cy="5.300" r=".7" fill="#d8d8de"/></svg>
<div class="a" style="left:215.500px;top:5.500px;width:1px;height:7px;background:#3a3a44"></div>
<svg style="left:227.5px;top:4.5px;transform:scale(1.12)" width="9" height="9" viewBox="0 0 9 9"><rect x="1" y="1.400" width="7" height="6.600" rx="1.400" class="ic" style="stroke-width:.8"/><path d="M3.200 3.400h2.600M4.500 3.400v2.800" class="ic" style="stroke-width:.8"/><path d="M2.500.6v1.200M6.500.6v1.200" class="ic" style="stroke-width:.7"/></svg>
<svg style="left:250.5px;top:4.5px;transform:scale(1.12)" width="9" height="9" viewBox="0 0 9 9"><path d="M1.500 1h6v4.500L4.500 8 1.500 5.500z" class="ic" style="stroke-width:.8"/><path d="M3 3.600h3" class="ic" style="stroke-width:.7"/></svg>
<svg style="left:273.0px;top:4.5px;transform:scale(1.12)" width="9" height="9" viewBox="0 0 9 9"><rect x="1" y="2.400" width="7" height="5.800" rx="1.400" class="ic" style="stroke-width:.8"/><path d="M4.500 6.600V4M3.300 5l1.200-1.200L5.700 5" class="ic" style="stroke-width:.8"/><path d="M2.600 2.400V1h3.800v1.400" class="ic" style="stroke-width:.7"/></svg>
<svg style="left:534.5px;top:4.0px;transform:scale(1.12)" width="8" height="10" viewBox="0 0 8 10"><rect x="2.600" y=".8" width="2.800" height="5" rx="1.400" class="ic" style="stroke-width:.8"/><path d="M1.200 4.400a2.800 2.800 0 0 0 5.600 0M4 7.200v1.600M2.600 8.800h2.800" class="ic" style="stroke-width:.8"/></svg>
<div class="a" style="left:553.500px;top:5.500px;width:1px;height:7px;background:#3a3a44"></div>
<div class="a" style="left:563.5px;top:4.500px;width:11px;height:9px;border-radius:2px;background:#2f1b5a"></div>
<svg style="left:564.5px;top:5.5px;transform:scale(1.12)" width="9" height="7" viewBox="0 0 9 7"><path d="M3.600 2H2.400a1.500 1.500 0 0 0 0 3h1.200M5.400 2h1.200a1.500 1.500 0 0 1 0 3H5.400M3.200 3.500h2.600" stroke="#d394fa" stroke-width=".9" fill="none" stroke-linecap="round"/></svg>
<div class="a" style="left:583.5px;top:4.500px;width:11px;height:9px;border-radius:2px;background:#2f1b5a"></div>
<svg style="left:584.5px;top:5.5px;transform:scale(1.12)" width="9" height="7" viewBox="0 0 9 7"><rect x="1" y="2" width="2.600" height="3" rx=".6" fill="#d394fa"/><rect x="5.400" y="2" width="2.600" height="3" rx=".6" fill="#d394fa"/><path d="M2.600 3.500h4" stroke="#d394fa" stroke-width=".8"/></svg>
<svg style="left:604.0px;top:5.0px;transform:scale(1.12)" width="10" height="8" viewBox="0 0 10 8"><rect x="1" y="2.400" width="4" height="3.200" rx="1" class="ic" style="stroke-width:.8"/><rect x="5" y="2.400" width="4" height="3.200" rx="1" class="ic" style="stroke-width:.8"/><path d="M5 1v6" class="ic" style="stroke-width:.8"/></svg>
<svg style="left:625.0px;top:5.0px;transform:scale(1.12)" width="10" height="8" viewBox="0 0 10 8"><rect x=".8" y="1.200" width="8.400" height="5.600" rx="1.600" class="ic" style="stroke-width:.9"/><path d="M2.600 4h4.800M3.600 3L2.600 4l1 1M6.400 3l1 1-1 1" class="ic" style="stroke-width:.7"/></svg>
<svg style="left:645.5px;top:4.5px;transform:scale(1.12)" width="9" height="9" viewBox="0 0 9 9"><circle cx="4.500" cy="4.500" r="3.500" class="ic" style="stroke-width:.8"/><path d="M2.900 4.500h3.200" class="ic" style="stroke-width:.8"/></svg>
<div class="a" style="left:658px;top:8.500px;width:45px;height:1px;background:#33333b"></div>
<div class="a" style="left:658px;top:8px;width:8px;height:2px;background:#f2f2f4;border-radius:1px"></div>
<div class="a" style="left:663.500px;top:6.500px;width:5px;height:5px;border-radius:50%;border:1.200px solid #f2f2f4;background:#1f1f26"></div>
<svg style="left:707.0px;top:4.5px;transform:scale(1.12)" width="9" height="9" viewBox="0 0 9 9"><circle cx="4.500" cy="4.500" r="3.500" class="ic" style="stroke-width:.8"/><path d="M2.900 4.500h3.200M4.500 2.900v3.200" class="ic" style="stroke-width:.8"/></svg>
<svg style="left:0;top:0" width="722" height="32" viewBox="0 0 722 32"><path d="M74.6 26.5v4.0M81.6 28.1v2.4M88.6 28.1v2.4M95.6 28.1v2.4M102.6 28.1v2.4M109.6 26.5v4.0M116.6 28.1v2.4M123.6 28.1v2.4M130.6 28.1v2.4M137.6 28.1v2.4M144.6 26.5v4.0M151.6 28.1v2.4M158.6 28.1v2.4M165.6 28.1v2.4M172.6 28.1v2.4M179.6 26.5v4.0M186.6 28.1v2.4M193.6 28.1v2.4M200.6 28.1v2.4M207.6 28.1v2.4M214.6 26.5v4.0M221.6 28.1v2.4M228.6 28.1v2.4M235.6 28.1v2.4M242.6 28.1v2.4M249.6 26.5v4.0M256.6 28.1v2.4M263.6 28.1v2.4M270.6 28.1v2.4M277.6 28.1v2.4M284.6 26.5v4.0M291.6 28.1v2.4M298.6 28.1v2.4M305.6 28.1v2.4M312.6 28.1v2.4M319.6 26.5v4.0M326.6 28.1v2.4M333.6 28.1v2.4M340.6 28.1v2.4M347.6 28.1v2.4M354.6 26.5v4.0M361.6 28.1v2.4M368.6 28.1v2.4M375.6 28.1v2.4M382.6 28.1v2.4M389.6 26.5v4.0M396.6 28.1v2.4M403.6 28.1v2.4M410.6 28.1v2.4M417.6 28.1v2.4M424.6 26.5v4.0M431.6 28.1v2.4M438.6 28.1v2.4M445.6 28.1v2.4M452.6 28.1v2.4M459.6 26.5v4.0M466.6 28.1v2.4M473.6 28.1v2.4M480.6 28.1v2.4M487.6 28.1v2.4M494.6 26.5v4.0M501.6 28.1v2.4M508.6 28.1v2.4M515.6 28.1v2.4M522.6 28.1v2.4M529.6 26.5v4.0M536.6 28.1v2.4M543.6 28.1v2.4M550.6 28.1v2.4M557.6 28.1v2.4M564.6 26.5v4.0M571.6 28.1v2.4M578.6 28.1v2.4M585.6 28.1v2.4M592.6 28.1v2.4M599.6 26.5v4.0M606.6 28.1v2.4M613.6 28.1v2.4M620.6 28.1v2.4M627.6 28.1v2.4M634.6 26.5v4.0M641.6 28.1v2.4M648.6 28.1v2.4M655.6 28.1v2.4M662.6 28.1v2.4M669.6 26.5v4.0M676.6 28.1v2.4M683.6 28.1v2.4M690.6 28.1v2.4M697.6 28.1v2.4M704.6 26.5v4.0M711.6 28.1v2.4M718.6 28.1v2.4" stroke="#5c5c66" stroke-width=".9" fill="none"/></svg>
<div class="t" style="left:97.0px;top:21px;width:24px;text-align:center;font-size:5.200px;color:#5e5e68">0:01</div>
<div class="t" style="left:132.0px;top:21px;width:24px;text-align:center;font-size:5.200px;color:#5e5e68">0:02</div>
<div class="t" style="left:167.0px;top:21px;width:24px;text-align:center;font-size:5.200px;color:#5e5e68">0:03</div>
<div class="t" style="left:202.0px;top:21px;width:24px;text-align:center;font-size:5.200px;color:#5e5e68">0:04</div>
<div class="t" style="left:237.0px;top:21px;width:24px;text-align:center;font-size:5.200px;color:#5e5e68">0:05</div>
<div class="t" style="left:272.0px;top:21px;width:24px;text-align:center;font-size:5.200px;color:#5e5e68">0:06</div>
<div class="t" style="left:307.0px;top:21px;width:24px;text-align:center;font-size:5.200px;color:#5e5e68">0:07</div>
<div class="t" style="left:342.0px;top:21px;width:24px;text-align:center;font-size:5.200px;color:#5e5e68">0:08</div>
<div class="t" style="left:377.0px;top:21px;width:24px;text-align:center;font-size:5.200px;color:#5e5e68">0:09</div>
<div class="t" style="left:412.0px;top:21px;width:24px;text-align:center;font-size:5.200px;color:#5e5e68">0:10</div>
<div class="t" style="left:447.0px;top:21px;width:24px;text-align:center;font-size:5.200px;color:#5e5e68">0:11</div>
<div class="t" style="left:482.0px;top:21px;width:24px;text-align:center;font-size:5.200px;color:#5e5e68">0:12</div>
<div class="t" style="left:517.0px;top:21px;width:24px;text-align:center;font-size:5.200px;color:#5e5e68">0:13</div>
<div class="t" style="left:552.0px;top:21px;width:24px;text-align:center;font-size:5.200px;color:#5e5e68">0:14</div>
<div class="t" style="left:587.0px;top:21px;width:24px;text-align:center;font-size:5.200px;color:#5e5e68">0:15</div>
<div class="t" style="left:622.0px;top:21px;width:24px;text-align:center;font-size:5.200px;color:#5e5e68">0:16</div>
<div class="t" style="left:657.0px;top:21px;width:24px;text-align:center;font-size:5.200px;color:#5e5e68">0:17</div>
<div class="t" style="left:692.0px;top:21px;width:24px;text-align:center;font-size:5.200px;color:#5e5e68">0:18</div>
<div class="a" style="left:74px;top:67.700px;right:0;height:39px;background:#27272c"></div>
<div class="a" style="left:2px;top:67.800px;width:42.300px;height:39.200px;border-radius:2px;background:#232429"></div>
<svg style="left:6.8px;top:84.0px" width="7" height="7" viewBox="0 0 7 7"><rect x="1.400" y=".8" width="4.200" height="5.400" rx=".8" fill="none" stroke="#a0a0aa" stroke-width=".8"/><path d="M1.400 2.600h4.200M1.400 4.400h4.200" stroke="#a0a0aa" stroke-width=".6"/></svg>
<svg style="left:19.1px;top:84.0px" width="7" height="7" viewBox="0 0 7 7"><path d="M.6 3.500q2.900-3.400 5.800 0q-2.900 3.400-5.800 0z" fill="none" stroke="#a0a0aa" stroke-width=".7"/><circle cx="3.500" cy="3.500" r="1" fill="#a0a0aa"/></svg>
<svg style="left:31.2px;top:84.0px" width="7" height="7" viewBox="0 0 7 7"><path d="M.8 2.600h1.200L3.800 1.200v4.600L2 4.400H.8z" fill="none" stroke="#a0a0aa" stroke-width=".7"/><path d="M5 2.300q.8 1.200 0 2.400" fill="none" stroke="#a0a0aa" stroke-width=".7"/></svg>
<svg style="left:6.8px;top:115.0px" width="7" height="7" viewBox="0 0 7 7"><path d="M3.600 5.400V1.200q1.600 0 1.800 1.400" fill="none" stroke="#a0a0aa" stroke-width=".7"/><circle cx="2.800" cy="5.400" r=".9" fill="none" stroke="#a0a0aa" stroke-width=".7"/><path d="M1.600 1v1.400M.9 1.700h1.400" stroke="#a0a0aa" stroke-width=".5"/></svg>
<svg style="left:19.1px;top:115.0px" width="7" height="7" viewBox="0 0 7 7"><path d="M.8 2.600h1.200L3.800 1.200v4.600L2 4.400H.8z" fill="none" stroke="#a0a0aa" stroke-width=".7"/><path d="M5 2.300q.8 1.200 0 2.400" fill="none" stroke="#a0a0aa" stroke-width=".7"/></svg>
<div class="a" style="left:48.300px;top:77.100px;width:23.600px;height:22.300px;border-radius:3px;background:#1f2027"><div class="t" style="left:0;right:0;top:9px;text-align:center;font-size:5.400px;color:#e0e0e6;font-weight:500">カバー</div></div>
<div class="a" style="left:74.300px;top:69px;width:269.200px;height:36.800px;border-radius:2px;overflow:hidden;background:#5b3a9c">
<svg style="left:0.0px;top:0;overflow:hidden" width="45.8" height="26.200"><use href="#sofa" width="45.8" height="26.200"/></svg><svg style="left:45.6px;top:0;overflow:hidden" width="45.8" height="26.200"><use href="#sofa" width="45.8" height="26.200"/></svg><svg style="left:91.2px;top:0;overflow:hidden" width="45.8" height="26.200"><use href="#sofa" width="45.8" height="26.200"/></svg><svg style="left:136.8px;top:0;overflow:hidden" width="45.8" height="26.200"><use href="#sofa" width="45.8" height="26.200"/></svg><svg style="left:182.4px;top:0;overflow:hidden" width="45.8" height="26.200"><use href="#sofa" width="45.8" height="26.200"/></svg><svg style="left:228.0px;top:0;overflow:hidden" width="45.8" height="26.200"><use href="#sofa" width="45.8" height="26.200"/></svg>
<div class="a" style="left:0;top:0;width:100%;height:26px;background:linear-gradient(rgba(96,96,108,.26) 0,rgba(96,96,108,.26) 55%,rgba(96,96,108,0) 78%)"></div><div class="a" style="left:0;top:25.800px;width:100%;height:.8px;background:#b4a2dc"></div><div class="a" style="left:0;top:0;width:100%;height:26px;border-radius:2px 2px 0 0;box-shadow:inset .8px .8px 0 rgba(255,255,255,.6)"></div><div class="a" style="left:2.300px;top:2.800px;width:70.500px;height:8.500px;border-radius:2px;background:rgba(40,40,46,.82)"></div>
<svg style="left:6px;top:4px;transform:scale(1.12)" width="6" height="6" viewBox="0 0 6 6"><rect x=".3" y=".3" width="5.400" height="5.400" rx="1.400" fill="#fff"/><path d="M2.200 1.700v2.600L4.400 3z" fill="#222"/></svg>
<div class="t" style="left:14.500px;top:4.200px;font-size:5.600px;color:#fff">0:07 Pixabay_154222</div>
</div>
<div class="a" style="left:343.700px;top:69px;width:236px;height:36.800px;border-radius:2px;overflow:hidden;background:#5b3a9c">
<svg style="left:-43.0px;top:0;overflow:hidden" width="45.7" height="26.200"><use href="#pom" width="45.7" height="26.200"/></svg><svg style="left:2.5px;top:0;overflow:hidden" width="45.7" height="26.200"><use href="#pom" width="45.7" height="26.200"/></svg><svg style="left:48.0px;top:0;overflow:hidden" width="45.7" height="26.200"><use href="#pom" width="45.7" height="26.200"/></svg><svg style="left:93.5px;top:0;overflow:hidden" width="45.7" height="26.200"><use href="#pom" width="45.7" height="26.200"/></svg><svg style="left:139.0px;top:0;overflow:hidden" width="45.7" height="26.200"><use href="#pom" width="45.7" height="26.200"/></svg><svg style="left:184.5px;top:0;overflow:hidden" width="45.7" height="26.200"><use href="#pom" width="45.7" height="26.200"/></svg><svg style="left:230.0px;top:0;overflow:hidden" width="45.7" height="26.200"><use href="#pom" width="45.7" height="26.200"/></svg>
<div class="a" style="left:0;top:25.800px;width:100%;height:.8px;background:#7c66b4"></div><div class="a" style="left:2.300px;top:2.800px;width:70.500px;height:8.500px;border-radius:2px;background:rgba(40,40,46,.82)"></div>
<svg style="left:6px;top:4px;transform:scale(1.12)" width="6" height="6" viewBox="0 0 6 6"><rect x=".3" y=".3" width="5.400" height="5.400" rx="1.400" fill="#fff"/><path d="M2.200 1.700v2.600L4.400 3z" fill="#222"/></svg>
<div class="t" style="left:14.500px;top:4.200px;font-size:5.600px;color:#fff">0:06 Pixabay_131920</div>
</div>
<div class="a" style="left:74.200px;top:108.300px;width:84px;height:20.500px;border-radius:2.500px;border:1px solid #d0d0d8;background:#5b3a9c;overflow:hidden"><svg style="left:0;top:-1.200px" width="82" height="20" viewBox="0 0 82 20"><path d="M0 20L0.0 19.2L1.0 19.2L2.0 19.2L3.0 18.0L4.0 16.7L5.0 18.7L6.0 18.0L7.0 17.0L8.0 16.9L9.0 15.5L10.0 16.5L11.0 16.8L12.0 15.1L13.0 16.0L14.0 17.4L15.0 17.2L16.0 14.7L17.0 18.3L18.0 17.5L19.0 17.0L20.0 18.6L21.0 18.6L22.0 18.2L23.0 17.7L24.0 17.4L25.0 16.7L26.0 16.0L27.0 17.5L28.0 14.9L29.0 16.7L30.0 15.5L31.0 17.5L32.0 15.4L33.0 17.8L34.0 17.6L35.0 18.5L36.0 13.5L37.0 18.7L38.0 17.5L39.0 16.7L40.0 18.3L41.0 17.7L42.0 18.7L43.0 18.2L44.0 18.6L45.0 15.7L46.0 16.4L47.0 16.0L48.0 14.3L49.0 16.5L50.0 17.7L51.0 18.8L52.0 17.3L53.0 17.8L54.0 17.2L55.0 18.6L56.0 16.8L57.0 17.8L58.0 18.6L59.0 15.0L60.0 15.0L61.0 15.5L62.0 13.6L63.0 15.6L64.0 15.3L65.0 15.4L66.0 15.7L67.0 15.9L68.0 15.9L69.0 15.2L70.0 14.6L71.0 15.6L72.0 17.9L73.0 16.4L74.0 17.2L75.0 17.1L76.0 17.6L77.0 17.7L78.0 18.5L79.0 17.6L80.0 19.2L81.0 19.2L82.0 19.2L82 20z" fill="#b79ae0"/></svg><svg style="left:6.300px;top:1.800px" width="6" height="7" viewBox="0 0 6 7"><path d="M3.200 5.200V1.200q1.600 0 1.800 1.400" fill="none" stroke="#fff" stroke-width=".7"/><circle cx="2.400" cy="5.200" r=".9" fill="none" stroke="#fff" stroke-width=".7"/><path d="M1.300.8v1.400M.6 1.500h1.400" stroke="#fff" stroke-width=".5"/></svg><div class="t" style="left:14.300px;top:2.300px;font-size:5.700px;color:#fff">0:02 RecA2025041701</div><div class="a" style="left:1px;top:6.800px;width:1.200px;height:5px;background:#e8e8f0;border-radius:1px"></div><div class="a" style="right:1px;top:6.800px;width:1.200px;height:5px;background:#e8e8f0;border-radius:1px"></div></div>
<div class="a" style="left:195.200px;top:22px;width:1.300px;height:149px;background:#d4d4d8"></div>
<svg style="left:192.800px;top:19.300px" width="6" height="7" viewBox="0 0 6 7"><path d="M.6 1.200a.8.8 0 0 1 .8-.8h3.200a.8.8 0 0 1 .8.800v3L3 6.400.6 4.200z" fill="#f4f4f6"/></svg>
<div class="a" style="left:190.900px;top:31.100px;width:10.200px;height:15.600px;border-radius:5.100px;background:#f4f4f6"></div>
<svg style="left:192.100px;top:33.600px" width="7.700" height="11" viewBox="0 0 7 10"><circle cx="2" cy="7.600" r="1.100" fill="none" stroke="#444" stroke-width=".6"/><circle cx="5" cy="7.600" r="1.100" fill="none" stroke="#444" stroke-width=".6"/><path d="M2.500 6.600L5 2.800M4.500 6.600L2 2.800M3.500.6v1.600M2.800 1.400h1.400" fill="none" stroke="#444" stroke-width=".6"/></svg>
<!--TLE-->
</div>
</div>

<svg style="left:0;top:0;pointer-events:none" width="729" height="450" viewBox="0 0 729 450"><path d="M155.80 122.76L156.60 122.84L137.70 313.93L141.78 314.36L134.70 328.20L130.64 313.20L134.72 313.62Z" fill="#df4538"/></svg>
</body></html>
